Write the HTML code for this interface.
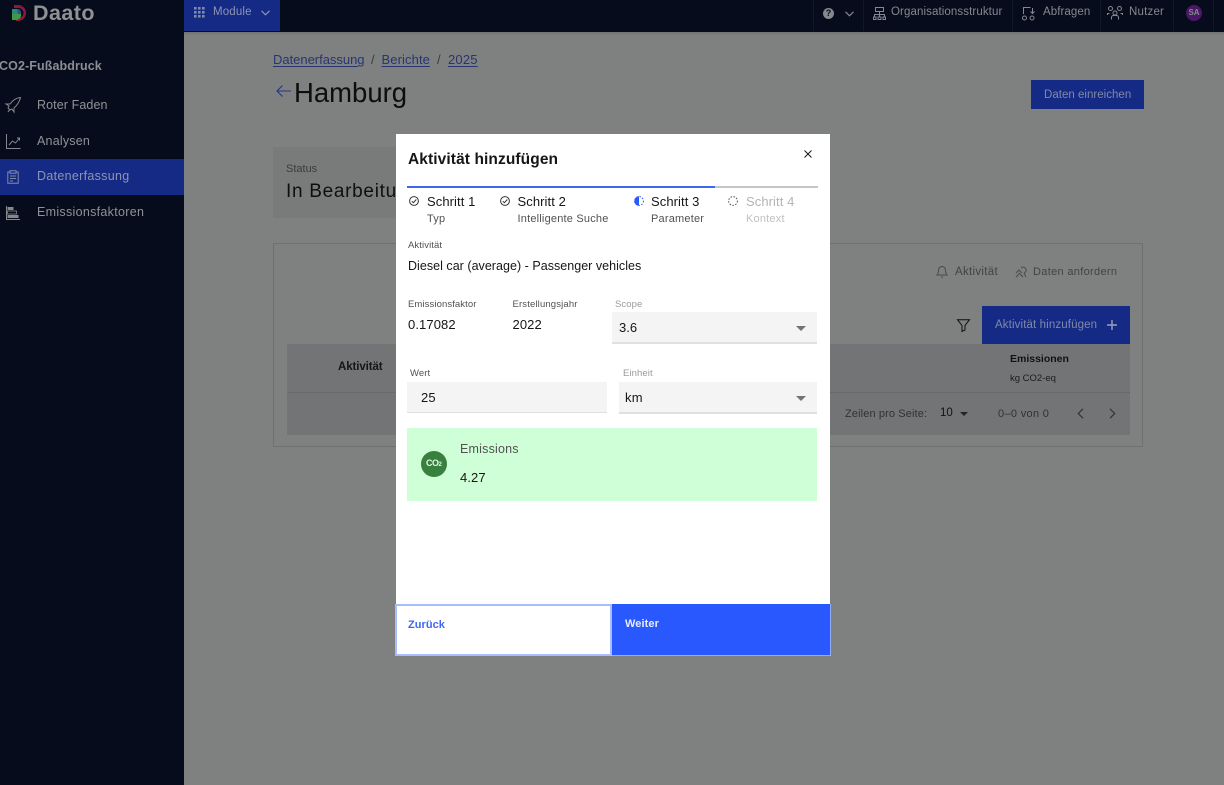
<!DOCTYPE html>
<html lang="de"><head><meta charset="utf-8"><title>Aktivität hinzufügen</title>
<style>
html,body{margin:0;padding:0}
body{width:1224px;height:785px;position:relative;overflow:hidden;background:#7f8080;font-family:"Liberation Sans",sans-serif;color:#161616}
.t{position:absolute;white-space:nowrap;line-height:1}
.a{position:absolute}
svg{position:absolute;overflow:visible}
.nav{color:#8f9296;font-size:12.5px}
.topt{color:#85888e;font-size:11.5px}
.sep{position:absolute;top:0;width:1px;height:31px;background:#111827}
u{text-underline-offset:2px}
</style></head><body>
<!-- top bar -->
<div class="a" style="left:0;top:0;width:1224px;height:32px;background:#060c1c"></div>
<div class="a" style="left:0;top:0;width:184px;height:785px;background:#060c1c"></div>
<div class="a" style="left:184px;top:0;width:96px;height:31px;background:#142a85"></div>
<div class="a" style="left:184px;top:32px;width:1040px;height:3px;background:linear-gradient(#6f7071,#7f8080)"></div>
<svg style="left:12px;top:5px" width="14" height="16" viewBox="0 0 14 16"><path d="M2 0h4a8 8 0 0 1 0 16H4v-3h2a5 5 0 0 0 1-10H2z" fill="#8c1a3c"/><path d="M0 4h6a4 4 0 0 1 3 5H0z" fill="#2a8a78"/><path d="M0 9h9a5 5 0 0 1-5 6H0z" fill="#3f9a45"/><path d="M5 4h1a4.500 4.500 0 0 1 3 5H6z" fill="#2d4f9c"/></svg>
<div class="t" style="left:33px;top:3px;font-size:21.500px;font-weight:700;color:#8f9192;letter-spacing:.45px">Daato</div>
<svg style="left:194px;top:7px" width="11" height="11" fill="#8189a8"><rect width="2.600" height="2.600"/><rect x="4" width="2.600" height="2.600"/><rect x="8" width="2.600" height="2.600"/><rect y="4" width="2.600" height="2.600"/><rect x="4" y="4" width="2.600" height="2.600"/><rect x="8" y="4" width="2.600" height="2.600"/><rect y="8" width="2.600" height="2.600"/><rect x="4" y="8" width="2.600" height="2.600"/><rect x="8" y="8" width="2.600" height="2.600"/></svg>
<div class="t" style="left:213px;top:7px;font-size:11.500px;color:#8d94b4;letter-spacing:.15px">Module</div>
<svg style="left:261px;top:10px" width="9" height="6" fill="none" stroke="#8d94b4" stroke-width="1.200"><path d="M.5.800 4.500 4.800 8.500.800"/></svg>
<div class="sep" style="left:813px"></div><div class="sep" style="left:863px"></div><div class="sep" style="left:1012px"></div><div class="sep" style="left:1100px"></div><div class="sep" style="left:1173px"></div><div class="sep" style="left:1213px"></div>
<div class="a" style="left:823px;top:8px;width:11px;height:11px;border-radius:50%;background:#85888c;color:#060c1c;font:700 9px/11px 'Liberation Sans',sans-serif;text-align:center">?</div>
<svg style="left:845px;top:11px" width="9" height="6" fill="none" stroke="#85888e" stroke-width="1.200"><path d="M.5.800 4.500 4.800 8.500.800"/></svg>
<svg style="left:873px;top:7px" width="13" height="13" fill="none" stroke="#85888e"><path d="M2.500.5h8v4h-8zM6.500 4.500v3M1.500 10V7.500h10V10M6.500 7.500V10M.5 10h2.500v2.500H.5zM5 10h3v2.500H5zM10 10h2.500v2.500H10z"/></svg>
<div class="t topt" style="left:891px;top:7px;letter-spacing:.1px">Organisationsstruktur</div>
<svg style="left:1022px;top:7px" width="13" height="14" fill="none" stroke="#85888e"><path d="M1.500 7V.5h7M10.500 1v5M8.500 4.500l2 2 2-2"/><circle cx="2.500" cy="11" r="2"/><circle cx="10" cy="11" r="2"/></svg>
<div class="t topt" style="left:1043px;top:7px;letter-spacing:.08px">Abfragen</div>
<svg style="left:1107px;top:6px" width="16" height="14" fill="none" stroke="#85888e"><circle cx="3.500" cy="2.500" r="2"/><circle cx="12.500" cy="2.500" r="2"/><circle cx="8" cy="7" r="2"/><path d="M.5 9V7.500h2M15.500 9V7.500h-2M4.500 13.500v-2a2 2 0 0 1 2-2h3a2 2 0 0 1 2 2v2"/></svg>
<div class="t topt" style="left:1129px;top:7px;letter-spacing:.2px">Nutzer</div>
<div class="a" style="left:1186px;top:5px;width:16px;height:16px;border-radius:50%;background:#4b1866;color:#85888e;font:700 8px/16px 'Liberation Sans',sans-serif;text-align:center">SA</div>

<!-- sidebar -->
<div class="t" style="left:-1px;top:60px;font-size:12.500px;font-weight:700;color:#8b8e92;letter-spacing:.1px">CO2-Fußabdruck</div>
<svg style="left:5px;top:97px" width="16" height="16" fill="none" stroke="#85888c"><path d="M15.500.5C11.500.8 8 3 5 7H1l3 2-1 2 2 2 2-1 2 3V11c3.500-3 5.500-6.500 6.500-10.500zM3 15l2-3"/></svg>
<div class="t nav" style="left:37px;top:99px;letter-spacing:.1px">Roter Faden</div>
<svg style="left:6px;top:134px" width="15" height="15" fill="none" stroke="#85888c"><path d="M.5 0v14.500h14M3 11l3.500-4 3 2 4-5M11 4h2.500v2.500"/></svg>
<div class="t nav" style="left:37px;top:135px;letter-spacing:.2px">Analysen</div>
<div class="a" style="left:0;top:159px;width:184px;height:36px;background:#142a85"></div>
<svg style="left:7px;top:170px" width="12" height="14" fill="none" stroke="#8189a8"><path d="M3 2H.8v11.300h10.400V2H9M3 .8h6v2.500H3zM3 6h6M3 8.500h6M3 11h3"/></svg>
<div class="t" style="left:37px;top:170px;font-size:12.500px;color:#8d94b4;letter-spacing:.3px">Datenerfassung</div>
<svg style="left:6px;top:206px" width="14" height="14" fill="#85888c"><rect y="0" width="1" height="14"/><rect x="1" y="13" width="13" height="1"/><rect x="1.500" y="1" width="6" height="3"/><rect x="1.500" y="5" width="9" height="3" fill="none" stroke="#85888c" stroke-width=".8"/><rect x="1.500" y="9" width="11" height="3"/></svg>
<div class="t nav" style="left:37px;top:206px;letter-spacing:.3px">Emissionsfaktoren</div>

<!-- page -->
<div class="t" style="left:273px;top:53px;font-size:13px;color:#273572;letter-spacing:-.02px"><u>Datenerfassung</u></div>
<div class="t" style="left:371px;top:53px;font-size:13px;color:#3a3b3d">/</div>
<div class="t" style="left:381.500px;top:53px;font-size:13px;color:#273572;letter-spacing:.1px"><u>Berichte</u></div>
<div class="t" style="left:437px;top:53px;font-size:13px;color:#3a3b3d">/</div>
<div class="t" style="left:448px;top:53px;font-size:13px;color:#273572;letter-spacing:.2px"><u>2025</u></div>
<svg style="left:276px;top:85px" width="15" height="12" fill="none" stroke="#24348a" stroke-width="1.100"><path d="M15 6H1M6.500.5 1 6l5.500 5.500"/></svg>
<div class="t" style="left:294px;top:79px;font-size:27.500px;color:#0d0d0d">Hamburg</div>
<div class="a" style="left:1031px;top:80px;width:113px;height:29px;background:#142a85"></div>
<div class="t" style="left:1044px;top:90px;font-size:11.500px;color:#8189a8;letter-spacing:.02px">Daten einreichen</div>
<div class="a" style="left:273px;top:147px;width:125px;height:71px;background:#797a7a"></div>
<div class="t" style="left:286px;top:163.500px;font-size:11px;color:#3c3c3c">Status</div>
<div class="t" style="left:286px;top:182px;font-size:19px;color:#0f0f0f;letter-spacing:.7px">In Bearbeitung</div>

<div class="a" style="left:273px;top:243px;width:870px;height:204px;border:1px solid #6f7170;box-sizing:border-box"></div>
<div class="a" style="left:287px;top:344px;width:843px;height:91px;background:#737475"></div>
<div class="a" style="left:287px;top:392px;width:843px;height:1px;background:#696a6a"></div>
<div class="t" style="left:338px;top:362px;font-size:11.500px;font-weight:700;color:#151515;letter-spacing:-.1px">Aktivität</div>
<svg style="left:936px;top:265px" width="12" height="13" fill="none" stroke="#4a4b4c"><path d="M1 10c1-1 1.500-2 1.500-5a3.500 3.500 0 0 1 7 0c0 3 .5 4 1.500 5zM5 12h2"/></svg>
<div class="t" style="left:955px;top:266.500px;font-size:11.500px;color:#424344;letter-spacing:.3px">Aktivität</div>
<svg style="left:1015px;top:265px" width="12" height="13" fill="none" stroke="#4a4b4c"><path d="M1 12l4-4M1 8l3-3 3 3M6 3a3 3 0 1 1 3 5M9 8l2 4M5 9l3 3"/></svg>
<div class="t" style="left:1033px;top:266.500px;font-size:11px;color:#424344;letter-spacing:.32px">Daten anfordern</div>
<svg style="left:957px;top:319px" width="13" height="13" fill="none" stroke="#0e0e0e"><path d="M.5.700h12L8 6.500v4.500l-3 1.500V6.500z"/></svg>
<div class="a" style="left:982px;top:306px;width:148px;height:38px;background:#142a85"></div>
<div class="t" style="left:995px;top:320px;font-size:11.500px;color:#8189a8;letter-spacing:.12px">Aktivität hinzufügen</div>
<svg style="left:1107px;top:320px" width="10" height="10" stroke="#9aa1bf" stroke-width="1.400"><path d="M5 0v10M0 5h10"/></svg>
<div class="t" style="left:1010px;top:354px;font-size:10.500px;font-weight:700;color:#121212;letter-spacing:0">Emissionen</div>
<div class="t" style="left:1010px;top:374px;font-size:9.500px;color:#1c1c1c">kg CO2-eq</div>
<div class="t" style="left:845px;top:409px;font-size:11px;color:#313233;letter-spacing:.12px">Zeilen pro Seite:</div>
<div class="t" style="left:940px;top:408px;font-size:11.500px;color:#111">10</div>
<svg style="left:960px;top:412px" width="8" height="4" fill="#242424"><path d="M0 0h8L4 4z"/></svg>
<div class="t" style="left:998px;top:409px;font-size:11px;color:#313233;letter-spacing:.32px">0–0 von 0</div>
<svg style="left:1077px;top:408px" width="7" height="11" fill="none" stroke="#333" stroke-width="1.200"><path d="M6 .8 1.300 5.500 6 10.200"/></svg>
<svg style="left:1109px;top:408px" width="7" height="11" fill="none" stroke="#333" stroke-width="1.200"><path d="M1 .8 5.700 5.500 1 10.200"/></svg>

<!-- modal -->
<div class="a" style="left:396px;top:134px;width:434px;height:522px;background:#fff"></div>
<div class="t" style="left:408px;top:152px;font-size:15.500px;font-weight:700;color:#161616;letter-spacing:.1px">Aktivität hinzufügen</div>
<svg style="left:804px;top:150px" width="8" height="8" stroke="#161616" stroke-width="1"><path d="M.5.500l7 7M7.500.500l-7 7"/></svg>
<div class="a" style="left:407px;top:186px;width:411px;height:2px;background:#c6c6c6"></div>
<div class="a" style="left:407px;top:186px;width:308px;height:2px;background:#3f68f0"></div>

<svg style="left:409px;top:196px" width="10" height="10" fill="none" stroke="#333"><circle cx="5" cy="5" r="4.400"/><path d="M2.800 5.200 4.400 6.700 7.300 3.500"/></svg>
<div class="t" style="left:427px;top:195px;font-size:13px;color:#161616;letter-spacing:.08px">Schritt 1</div>
<div class="t" style="left:427px;top:213.500px;font-size:11px;color:#525252;letter-spacing:.2px">Typ</div>
<svg style="left:500px;top:196px" width="10" height="10" fill="none" stroke="#333"><circle cx="5" cy="5" r="4.400"/><path d="M2.800 5.200 4.400 6.700 7.300 3.500"/></svg>
<div class="t" style="left:517.500px;top:195px;font-size:13px;color:#161616;letter-spacing:.08px">Schritt 2</div>
<div class="t" style="left:517.500px;top:213.500px;font-size:11px;color:#525252;letter-spacing:.2px">Intelligente Suche</div>
<svg style="left:634px;top:196px" width="10" height="10" fill="none"><path d="M5 .3a4.700 4.700 0 0 0 0 9.400z" fill="#2a58ff"/><circle cx="5" cy="5" r="4.400" stroke="#2a58ff" stroke-dasharray="1.500 1.500"/></svg>
<div class="t" style="left:651px;top:195px;font-size:13px;color:#161616;letter-spacing:.08px">Schritt 3</div>
<div class="t" style="left:651px;top:213.500px;font-size:11px;color:#525252;letter-spacing:.2px">Parameter</div>
<svg style="left:728px;top:196px" width="10" height="10" fill="none"><circle cx="5" cy="5" r="4.400" stroke="#555" stroke-dasharray="1.600 1.400"/></svg>
<div class="t" style="left:746px;top:195px;font-size:13px;color:#b4b4b4;letter-spacing:.08px">Schritt 4</div>
<div class="t" style="left:746px;top:213.500px;font-size:11px;color:#c0c0c0;letter-spacing:.2px">Kontext</div>

<div class="t" style="left:408px;top:240.500px;font-size:9.500px;color:#525252;letter-spacing:.1px">Aktivität</div>
<div class="t" style="left:408px;top:260px;font-size:12.500px;color:#161616;letter-spacing:.03px">Diesel car (average) - Passenger vehicles</div>
<div class="t" style="left:408px;top:299.500px;font-size:9.500px;color:#525252;letter-spacing:.1px">Emissionsfaktor</div>
<div class="t" style="left:408px;top:318px;font-size:13px;color:#161616;letter-spacing:.1px">0.17082</div>
<div class="t" style="left:512.500px;top:299.500px;font-size:9.500px;color:#525252;letter-spacing:.15px">Erstellungsjahr</div>
<div class="t" style="left:512.500px;top:318px;font-size:13px;color:#161616;letter-spacing:.1px">2022</div>
<div class="t" style="left:615px;top:299.500px;font-size:9.500px;color:#9a9a9a;letter-spacing:.1px">Scope</div>
<div class="a" style="left:612px;top:312px;width:205px;height:32px;background:#f4f4f4;border-bottom:2px solid #e0e0e0;box-sizing:border-box"></div>
<div class="t" style="left:619px;top:321px;font-size:13px;color:#161616">3.6</div>
<svg style="left:796px;top:326px" width="10" height="5" fill="#737373"><path d="M0 0h10L5 5z"/></svg>
<div class="t" style="left:410px;top:368.500px;font-size:9.500px;color:#525252;letter-spacing:.1px">Wert</div>
<div class="a" style="left:407px;top:382px;width:200px;height:31px;background:#f4f4f4;border-bottom:1px solid #e0e0e0;box-sizing:border-box"></div>
<div class="t" style="left:421px;top:391px;font-size:13px;color:#161616;letter-spacing:.1px">25</div>
<div class="t" style="left:623px;top:368.500px;font-size:9.500px;color:#9a9a9a;letter-spacing:.1px">Einheit</div>
<div class="a" style="left:619px;top:382px;width:198px;height:32px;background:#f4f4f4;border-bottom:2px solid #e0e0e0;box-sizing:border-box"></div>
<div class="t" style="left:625px;top:391px;font-size:13px;color:#161616;letter-spacing:.2px">km</div>
<svg style="left:796px;top:396px" width="10" height="5" fill="#737373"><path d="M0 0h10L5 5z"/></svg>

<div class="a" style="left:407px;top:427.500px;width:410px;height:73.500px;background:#ceffd6"></div>
<div class="a" style="left:421px;top:451px;width:26px;height:26px;border-radius:50%;background:#37803d"></div>
<div class="t" style="left:426px;top:459px;font-size:9px;font-weight:700;color:#e8f5ea;letter-spacing:-.5px">CO<span style="font-size:6px">2</span></div>
<div class="t" style="left:460px;top:443px;font-size:12.500px;color:#525252;letter-spacing:.2px">Emissions</div>
<div class="t" style="left:460px;top:471px;font-size:13px;color:#161616;letter-spacing:.1px">4.27</div>

<div class="a" style="left:395px;top:604px;width:217px;height:52px;background:#fff;border:2px solid #a8bdff;box-sizing:border-box"></div>
<div class="a" style="left:612px;top:604px;width:219px;height:52px;background:#2a58ff;border:1px solid #94adff;border-top:none;border-left:none;box-sizing:border-box"></div>
<div class="t" style="left:408px;top:620px;font-size:11px;font-weight:700;color:#3f68f0;letter-spacing:.05px">Zurück</div>
<div class="t" style="left:625px;top:619px;font-size:11px;font-weight:700;color:#e6ecff;letter-spacing:.1px">Weiter</div>
</body></html>
